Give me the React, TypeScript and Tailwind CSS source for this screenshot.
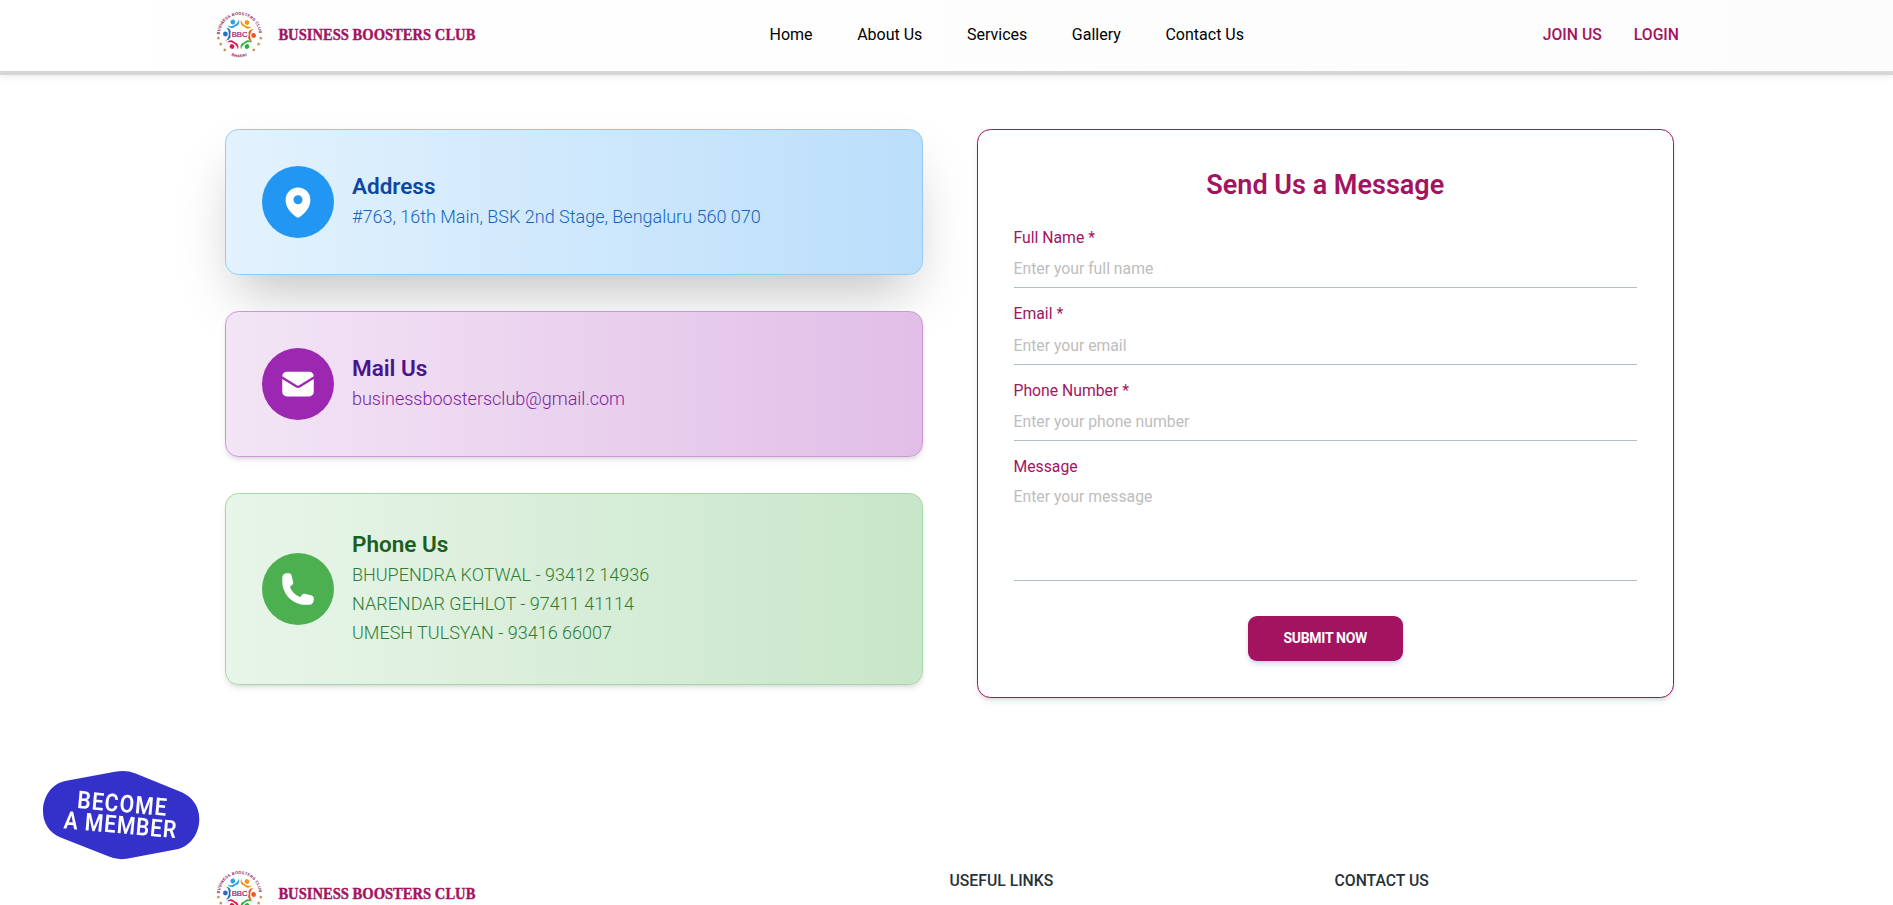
import type { ReactNode } from "react";
import { HiEnvelope, HiMapPin, HiPhone } from "react-icons/hi2";

const figures = [
  { angle: -28, color: "#29a3e0" },
  { angle: 32, color: "#f7941d" },
  { angle: 94, color: "#ea5b1f" },
  { angle: 148, color: "#2fae3c" },
  { angle: 212, color: "#d81b4f" },
  { angle: 272, color: "#1b75bc" },
];

const stars = [
  [5.4, 31.6],
  [7.8, 37.6],
  [11.8, 43.3],
  [40.8, 43.3],
  [45.6, 37.6],
  [47.8, 31.6],
];

function Emblem() {
  return (
    <svg viewBox="0 1.5 54 54" className="h-[54px] w-[54px] shrink-0 overflow-visible" aria-hidden="true">
      <defs>
        <path id="ring-top" d="M 6.8 28 A 19.6 19.6 0 0 1 46 28" />
        <path id="ring-bottom" d="M 14 46.8 A 21.7 21.7 0 0 0 39 46.8" />
      </defs>
      <text fontFamily="Liberation Sans, sans-serif" fontWeight="700" fontSize="4" fill="#8f0f52">
        <textPath href="#ring-top" textLength="60">BUSINESS BOOSTERS CLUB</textPath>
      </text>
      <text fontFamily="Liberation Sans, sans-serif" fontWeight="700" fontSize="4" fill="#8f0f52" textAnchor="middle">
        <textPath href="#ring-bottom" startOffset="50%">BHARAT</textPath>
      </text>
      {figures.map((f) => (
        <g key={f.angle} transform={`rotate(${f.angle} 26.5 28)`} fill={f.color}>
          <circle cx="26.5" cy="13.9" r="2.4" />
          <path d="M20 14.3 Q22 17.3 26.5 17.3 Q31 17.3 33 14.3 Q32.6 18.1 29 19.3 L26.5 21.5 L24 19.3 Q20.4 18.1 20 14.3Z" />
        </g>
      ))}
      <circle cx="26.5" cy="28" r="9.2" fill="#fff" />
      {stars.map(([x, y]) => (
        <path
          key={`${x}-${y}`}
          transform={`translate(${x} ${y})`}
          d="M0-1.9 .55-.6 1.9-.6 .9.3 1.2 1.6 0 .9-1.2 1.6-.9.3-1.9-.6-.55-.6Z"
          fill="#b98a3a"
        />
      ))}
      <text x="26.7" y="30.8" fontFamily="Liberation Sans, sans-serif" fontSize="7.8" fill="#a3135f" stroke="#a3135f" strokeWidth="0.2" textAnchor="middle">
        BBC
      </text>
    </svg>
  );
}

function Brand() {
  return (
    <div className="flex items-center">
      <Emblem />
      <svg viewBox="0 0 210 28" className="ml-[11px] h-7 w-[210px] overflow-visible">
        <text
          x="0.4"
          y="18.6"
          textLength="197"
          lengthAdjust="spacingAndGlyphs"
          fontFamily="Liberation Serif, serif"
          fontWeight="700"
          fontSize="16.2"
          fill="#a3135f"
          stroke="#a3135f"
          strokeWidth="0.4"
        >
          BUSINESS BOOSTERS CLUB
        </text>
      </svg>
    </div>
  );
}

interface InfoCardProps {
  card: string;
  badge: string;
  title: string;
  titleColor: string;
  textColor: string;
  lines: string[];
  icon: ReactNode;
}

function InfoCard({ card, badge, title, titleColor, textColor, lines, icon }: InfoCardProps) {
  return (
    <div className={`flex items-center gap-[18px] rounded-[13.5px] border bg-linear-to-r px-9 ${card}`}>
      <div className={`flex size-[72px] shrink-0 items-center justify-center rounded-full text-white ${badge}`}>
        {icon}
      </div>
      <div className="pb-[2px]">
        <h5 className={`text-[22.5px] leading-[31px] font-semibold ${titleColor}`}>{title}</h5>
        {lines.map((line) => (
          <p key={line} className={`text-[18px] leading-[29px] font-light ${textColor}`}>
            {line}
          </p>
        ))}
      </div>
    </div>
  );
}

function Field({ label, placeholder }: { label: string; placeholder: string }) {
  return (
    <label className="flex h-[76.5px] flex-col pt-[14px]">
      <span className="text-[15.75px] leading-6 text-[#a3135f]">{label}</span>
      <input
        placeholder={placeholder}
        className="h-[38.5px] w-full border-b border-[#b0bec5] text-[15.75px] outline-none placeholder:text-[#bdbdbd]"
      />
    </label>
  );
}

export default function App() {
  return (
    <div className="h-[905px] overflow-hidden bg-white font-[Roboto,sans-serif]">
      <header className="relative z-10 flex h-[75px] items-center border-b-4 border-[#d6d8d7] bg-linear-to-r from-white to-[#fcfcfc] pb-[2px] shadow-[0_2px_6px_rgba(0,0,0,0.08)]">
        <div className="mx-auto flex w-[1467px] items-center justify-between">
          <div className="flex w-[556.5px] items-center">
            <Brand />
          </div>
          <nav className="flex flex-1 gap-[44.6px] text-base text-black">
            <a>Home</a>
            <a>About Us</a>
            <a>Services</a>
            <a>Gallery</a>
            <a>Contact Us</a>
          </nav>
          <div className="flex gap-8 pr-[1px] text-[15.75px] font-medium text-[#a3135f]">
            <a>JOIN US</a>
            <a>LOGIN</a>
          </div>
        </div>
      </header>

      <main className="mx-auto mt-[54px] grid w-[1455px] grid-cols-2 gap-[54px] pl-[6px]">
        <div className="flex flex-col gap-9">
          <InfoCard
            card="h-[146px] border-[#90caf9] from-[#e3f2fd] to-[#bbdefb] shadow-[0_28px_56px_-13px_rgba(0,0,0,0.25)]"
            badge="bg-[#2196f3]"
            title="Address"
            titleColor="text-[#0d47a1]"
            textColor="text-[#1565c0]"
            lines={["#763, 16th Main, BSK 2nd Stage, Bengaluru 560 070"]}
            icon={<HiMapPin className="size-9" />}
          />
          <InfoCard
            card="relative h-[146px] border-[#ce93d8] from-[#f3e5f5] to-[#e1bee7] shadow-md"
            badge="bg-[#9c27b0]"
            title="Mail Us"
            titleColor="text-[#4a148c]"
            textColor="text-[#7b1fa2]"
            lines={["businessboostersclub@gmail.com"]}
            icon={<HiEnvelope className="size-9" />}
          />
          <InfoCard
            card="h-[192px] border-[#a5d6a7] from-[#e8f5e9] to-[#c8e6c9] shadow-md"
            badge="bg-[#4caf50]"
            title="Phone Us"
            titleColor="text-[#1b5e20]"
            textColor="text-[#2e7d32]"
            lines={["BHUPENDRA KOTWAL - 93412 14936", "NARENDAR GEHLOT - 97411 41114", "UMESH TULSYAN - 93416 66007"]}
            icon={<HiPhone className="size-9" />}
          />
        </div>

        <form className="flex h-[569px] flex-col rounded-[13.5px] border border-[#a3135f] bg-white p-9 shadow-md">
          <h4 className="mb-[7.75px] pt-[1px] text-center text-[27px] leading-[37px] font-semibold text-[#a3135f]">
            Send Us a Message
          </h4>
          <Field label="Full Name *" placeholder="Enter your full name" />
          <Field label="Email *" placeholder="Enter your email" />
          <Field label="Phone Number *" placeholder="Enter your phone number" />
          <label className="flex flex-col pt-[13.5px]">
            <span className="text-[15.75px] leading-6 text-[#a3135f]">Message</span>
            <textarea
              placeholder="Enter your message"
              className="h-[102px] w-full resize-none border-b border-[#b0bec5] pt-[7px] text-[15.75px] leading-[22.5px] outline-none placeholder:text-[#bdbdbd]"
            />
          </label>
          <button
            type="button"
            className="mt-[35.25px] h-[45px] w-[155px] shrink-0 self-center rounded-[9px] bg-[#a3135f] pb-[2px] text-[14px] leading-[18px] font-bold tracking-[-0.3px] text-white shadow-[0_4px_6px_-1px_rgba(63,81,181,0.2),0_2px_4px_-2px_rgba(63,81,181,0.2)]"
          >
            SUBMIT NOW
          </button>
        </form>
      </main>

      <footer className="mx-auto mt-[169px] flex w-[1467px]">
        <div className="w-[736.5px]">
          <Brand />
        </div>
        <h6 className="mt-[2px] w-[385px] text-[15.75px] leading-6 font-medium text-[#263238]">USEFUL LINKS</h6>
        <h6 className="mt-[2px] text-[15.75px] leading-6 font-medium text-[#263238]">CONTACT US</h6>
      </footer>

      <a className="fixed top-[768px] left-[40px]">
        <svg viewBox="0 0 162 94" className="h-[94px] w-[162px]">
          <path
            d="M25 13 L75 3.7 Q86 1.6 95 5.3 L141.7 24.3 C152 29 159.3 38 159.3 51 C159.3 65 151 77.5 138.3 81 L86.7 90.7 Q77 92.4 68.3 88.3 L20 69.3 C9 64.5 3 55 3 43 C3 28 12 16 25 13Z"
            fill="#3431cb"
          />
          <g transform="translate(81 47) rotate(5) scale(0.86 1)" fill="#fff" fontFamily="Roboto, sans-serif" fontWeight="600" fontSize="24.5" textAnchor="middle">
            <text x="0" y="-3" textLength="104">BECOME</text>
            <text x="0" y="18.3" textLength="131">A MEMBER</text>
          </g>
        </svg>
      </a>
    </div>
  );
}
